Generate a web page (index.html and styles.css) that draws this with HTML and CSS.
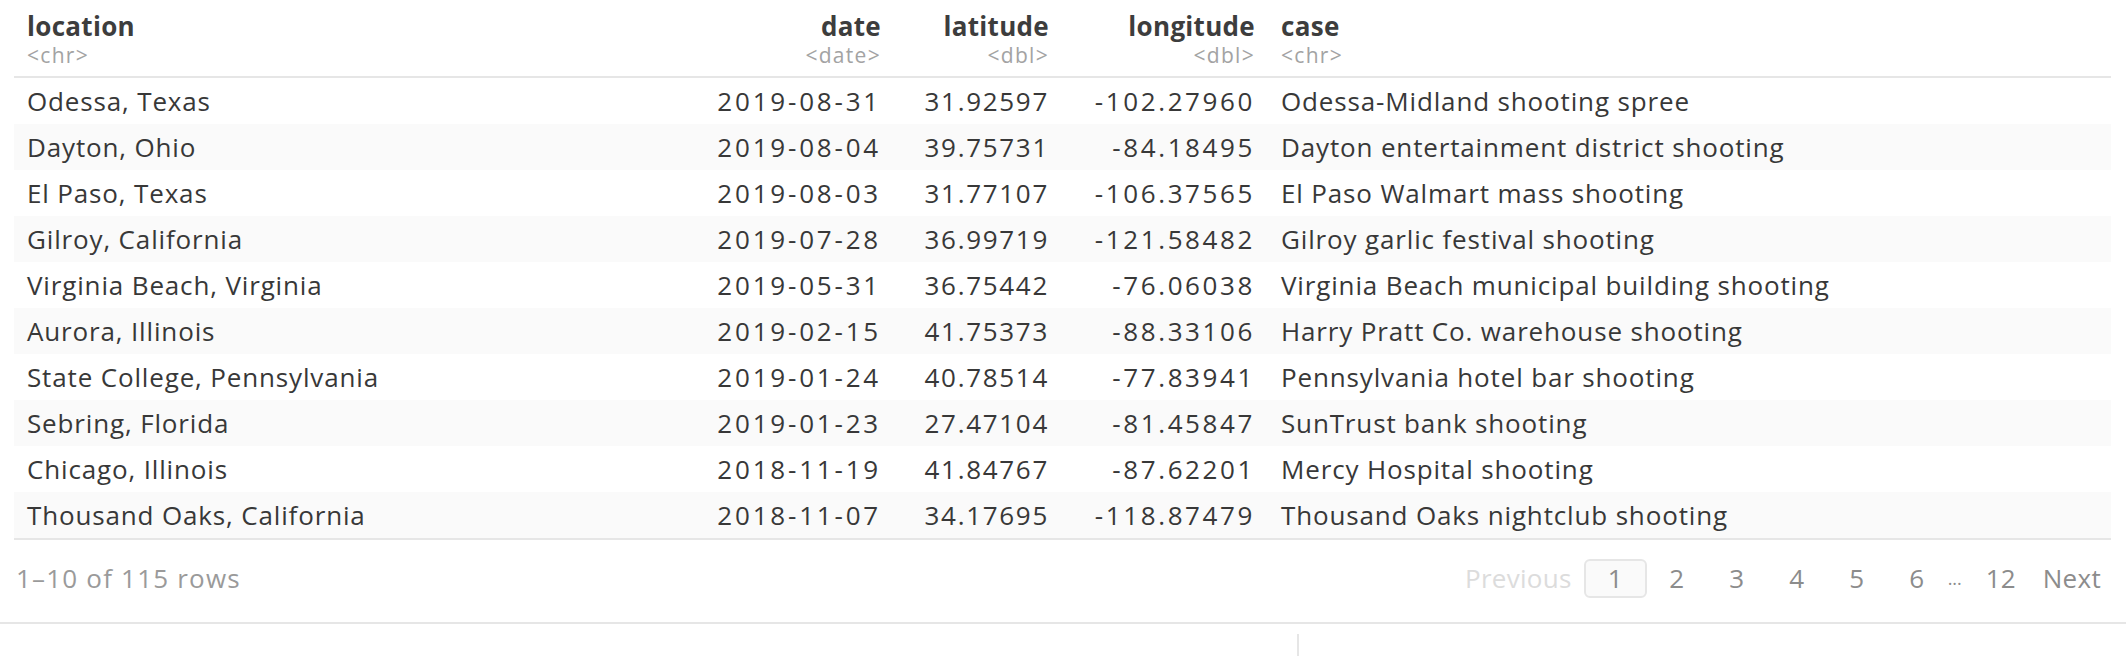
FILE: index.html
```html
<!DOCTYPE html>
<html lang="en">
<head>
<meta charset="utf-8">
<title>Mass shootings</title>
<link rel="stylesheet" href="styles.css">
</head>
<body>
<div class="widget">
  <table class="rt">
    <colgroup>
      <col class="c-loc"><col class="c-date"><col class="c-lat"><col class="c-lon"><col class="c-case">
    </colgroup>
    <thead>
      <tr>
        <th class="left"><div class="name">location</div><div class="type">&lt;chr&gt;</div></th>
        <th class="right"><div class="name">date</div><div class="type">&lt;date&gt;</div></th>
        <th class="right"><div class="name">latitude</div><div class="type">&lt;dbl&gt;</div></th>
        <th class="right"><div class="name">longitude</div><div class="type">&lt;dbl&gt;</div></th>
        <th class="left"><div class="name">case</div><div class="type">&lt;chr&gt;</div></th>
      </tr>
    </thead>
    <tbody>
      <tr><td>Odessa, Texas</td><td class="num date">2019-08-31</td><td class="num lat">31.92597</td><td class="num lon">-102.27960</td><td>Odessa-Midland shooting spree</td></tr>
      <tr><td>Dayton, Ohio</td><td class="num date">2019-08-04</td><td class="num lat">39.75731</td><td class="num lon">-84.18495</td><td>Dayton entertainment district shooting</td></tr>
      <tr><td>El Paso, Texas</td><td class="num date">2019-08-03</td><td class="num lat">31.77107</td><td class="num lon">-106.37565</td><td>El Paso Walmart mass shooting</td></tr>
      <tr><td>Gilroy, California</td><td class="num date">2019-07-28</td><td class="num lat">36.99719</td><td class="num lon">-121.58482</td><td>Gilroy garlic festival shooting</td></tr>
      <tr><td>Virginia Beach, Virginia</td><td class="num date">2019-05-31</td><td class="num lat">36.75442</td><td class="num lon">-76.06038</td><td>Virginia Beach municipal building shooting</td></tr>
      <tr><td>Aurora, Illinois</td><td class="num date">2019-02-15</td><td class="num lat">41.75373</td><td class="num lon">-88.33106</td><td>Harry Pratt Co. warehouse shooting</td></tr>
      <tr><td>State College, Pennsylvania</td><td class="num date">2019-01-24</td><td class="num lat">40.78514</td><td class="num lon">-77.83941</td><td>Pennsylvania hotel bar shooting</td></tr>
      <tr><td>Sebring, Florida</td><td class="num date">2019-01-23</td><td class="num lat">27.47104</td><td class="num lon">-81.45847</td><td>SunTrust bank shooting</td></tr>
      <tr><td>Chicago, Illinois</td><td class="num date">2018-11-19</td><td class="num lat">41.84767</td><td class="num lon">-87.62201</td><td>Mercy Hospital shooting</td></tr>
      <tr><td>Thousand Oaks, California</td><td class="num date">2018-11-07</td><td class="num lat">34.17695</td><td class="num lon">-118.87479</td><td>Thousand Oaks nightclub shooting</td></tr>
    </tbody>
  </table>
  <div class="pagination">
    <div class="page-info">1–10 of 115 rows</div>
    <div class="pages">
      <span class="nav disabled">Previous</span>
      <span class="page-btn current">1</span>
      <span class="page-btn">2</span>
      <span class="page-btn">3</span>
      <span class="page-btn">4</span>
      <span class="page-btn">5</span>
      <span class="page-btn">6</span>
      <span class="ellipsis">...</span>
      <span class="page-btn wide">12</span>
      <span class="nav">Next</span>
    </div>
  </div>
</div>
<div class="footer">
  <div class="pane-left"></div>
  <div class="pane-right"></div>
</div>
</body>
</html>
```

FILE: styles.css
```css
html, body {
  margin: 0;
  padding: 0;
  background: #ffffff;
}

body {
  font-family: "Open Sans", "Liberation Sans", sans-serif;
  font-size: 26px;
  color: #333333;
}

.widget {
  padding: 0 15px 0 14px;
}

.rt {
  width: 100%;
  table-layout: fixed;
  border-collapse: collapse;
  border-spacing: 0;
}

.c-loc { width: 680px; }
.c-date { width: 200px; }
.c-lat { width: 168px; }
.c-lon { width: 206px; }
.c-case { width: auto; }

.rt th {
  padding: 10px 13px 8px 13px;
  border-bottom: 2px solid #e6e6e6;
  font-weight: normal;
  vertical-align: bottom;
}

.rt th.left { text-align: left; }
.rt th.right { text-align: right; }

.name {
  font-weight: 700;
  font-size: 26px;
  line-height: 32px;
  letter-spacing: 0.3px;
  color: #3d3d3d;
}

.type {
  font-size: 21px;
  line-height: 26px;
  letter-spacing: 1.3px;
  color: #a3a3a3;
}

.rt td {
  height: 46px;
  padding: 0 13px;
  line-height: 46px;
  white-space: nowrap;
  overflow: hidden;
  letter-spacing: 0.85px;
  color: #383838;
}

.rt td.num {
  text-align: right;
  font-variant-numeric: tabular-nums;
}

.rt td.date { letter-spacing: 2.8px; }
.rt td.lat { letter-spacing: 1.7px; }
.rt td.lon { letter-spacing: 2.6px; }

.rt tbody tr:nth-child(even) td {
  background: #fafafa;
}

.rt tbody tr:last-child td {
  border-bottom: 2px solid #e6e6e6;
}

.pagination {
  box-sizing: border-box;
  display: flex;
  align-items: center;
  justify-content: space-between;
  height: 82px;
  padding: 0 10px 6px 2px;
}

.page-info {
  color: #9a9a9a;
  letter-spacing: 1.2px;
}

.pages {
  display: flex;
  align-items: center;
  color: #8c8c8c;
}

.nav.disabled {
  color: #dcdcdc;
  margin-right: 12px;
  letter-spacing: 0.3px;
}

.nav {
  margin-left: 4px;
  letter-spacing: 0.3px;
}

.page-btn {
  box-sizing: border-box;
  display: flex;
  align-items: center;
  justify-content: center;
  min-width: 60px;
  height: 39px;
  padding: 0 18px;
  border: 2px solid transparent;
  border-radius: 6px;
}

.page-btn.current {
  min-width: 63px;
  background: #fafafa;
  border-color: #e6e6e6;
}

.page-btn.wide {
  min-width: 76px;
}

.ellipsis {
  width: 16px;
  font-size: 18px;
  text-align: center;
}

.footer {
  display: flex;
  border-top: 2px solid #e6e6e6;
  padding-top: 10px;
}

.pane-left {
  width: 1297px;
  height: 30px;
  border-right: 2px solid #e6e6e6;
}

.pane-right {
  flex: 1;
}
```
